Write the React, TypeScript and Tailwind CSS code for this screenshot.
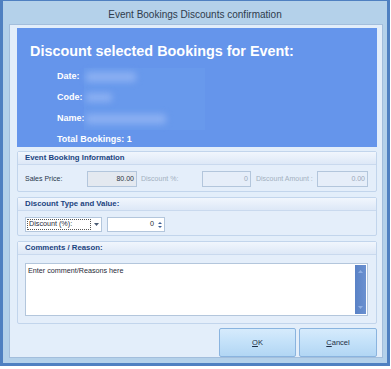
import type { ReactNode } from "react";

function Group({ title, className, children }: { title: string; className: string; children: ReactNode }) {
  return (
    <div className={`flex w-[360px] flex-col rounded-[2px] border border-[#c2d5ec] bg-[#e4eefa] ${className}`}>
      <div className="flex h-[13px] shrink-0 items-center border-b border-[#c9d9ee] bg-linear-to-b from-[#f1f6fd] to-[#dde8f7] pl-[7px] text-[7.8px] font-bold text-[#1b4480]">
        {title}
      </div>
      {children}
    </div>
  );
}

function ReadBox({ value, width, dark }: { value: string; width: string; dark?: boolean }) {
  return (
    <div
      className={`flex h-[16px] items-center justify-end border border-[#b3c6dc] pr-[2px] text-[7px] ${width} ${
        dark ? "bg-[#e4e9f0] text-[#2a3544]" : "bg-[#e6eef9] text-[#9aa8ba]"
      }`}
    >
      {value}
    </div>
  );
}

export default function App() {
  return (
    <div className="h-[369px] w-[391px] bg-white font-['Liberation_Sans',Arial,sans-serif]">
      <div className="flex h-[366px] w-[390px] flex-col border-x-[3px] border-t border-b-[3px] border-[#4f80c1] bg-[#b4d1ea]">
        {/* title bar */}
        <div className="flex h-[23px] items-center justify-center pt-[3px] text-[10px] text-[#2e3b4c]">
          Event Bookings Discounts confirmation
        </div>

        {/* client area */}
        <div className="ml-[6px] mr-[4px] flex h-[334px] flex-col border border-[#a3bedc] bg-[#e3eefa] pl-[7px] pt-[3px]">
          {/* banner */}
          <div className="relative h-[119px] w-[360px] shrink-0 bg-[#6595eb] pl-[13px] pt-[14px] text-white">
            <div className="text-[14.4px] font-bold leading-[18px]">Discount selected Bookings for Event:</div>
            <div className="mt-[6px] flex flex-col pl-[27px] text-[9px] font-bold">
              <div className="h-[21px] leading-[21px]">Date:</div>
              <div className="h-[21px] leading-[21px]">Code:</div>
              <div className="h-[21px] leading-[21px]">Name:</div>
              <div className="h-[21px] leading-[21px]">Total Bookings: 1</div>
            </div>
            {/* redacted values */}
            <div className="absolute left-[67px] top-[40px] h-[62px] w-[121px] bg-[#6899ec]">
              <div className="absolute left-[2px] top-[4px] h-[10px] w-[50px] rounded-[3px] bg-[#8aaff2] blur-[3px]" />
              <div className="absolute left-[2px] top-[25px] h-[9px] w-[26px] rounded-[3px] bg-[#8aaff2] blur-[3px]" />
              <div className="absolute left-[2px] top-[46px] h-[10px] w-[80px] rounded-[3px] bg-[#8aaff2] blur-[3px]" />
            </div>
          </div>

          {/* Event Booking Information */}
          <Group title="Event Booking Information" className="mt-[4px] h-[41px]">
            <div className="flex items-center pl-[7px] pt-[6px] text-[7px]">
              <span className="w-[62px] text-[#26364a]">Sales Price:</span>
              <ReadBox value="80.00" width="w-[50px]" dark />
              <span className="ml-[4px] w-[61px] text-[#a3b0c0]">Discount %:</span>
              <ReadBox value="0" width="w-[49px]" />
              <span className="ml-[5px] w-[61px] text-[#a3b0c0]">Discount Amount :</span>
              <ReadBox value="0.00" width="w-[51px]" />
            </div>
          </Group>

          {/* Discount Type and Value */}
          <Group title="Discount Type and Value:" className="mt-[5px] h-[39px]">
            <div className="flex items-center pl-[7px] pt-[6px] text-[7.2px] text-[#1f2a38]">
              <div className="flex h-[15px] w-[77px] items-stretch border border-[#b3c6dc] bg-white">
                <div className="m-[1px] flex flex-1 items-center border border-dotted border-[#555] pl-[1px]">
                  Discount (%):
                </div>
                <div className="flex w-[9px] items-center justify-center">
                  <svg width="5" height="3" viewBox="0 0 5 3">
                    <path d="M0 0h5L2.5 3z" fill="#4a5b73" />
                  </svg>
                </div>
              </div>
              <div className="ml-[5px] flex h-[15px] w-[58px] items-center justify-end border border-[#b3c6dc] bg-white pr-[2px]">
                <span className="mr-[4px]">0</span>
                <div className="flex flex-col gap-[2px]">
                  <svg width="4" height="2" viewBox="0 0 4 2">
                    <path d="M0 2h4L2 0z" fill="#3d5f96" />
                  </svg>
                  <svg width="4" height="2" viewBox="0 0 4 2">
                    <path d="M0 0h4L2 2z" fill="#3d5f96" />
                  </svg>
                </div>
              </div>
            </div>
          </Group>

          {/* Comments / Reason */}
          <Group title="Comments / Reason:" className="mt-[5px] h-[83px]">
            <div className="pl-[7px] pt-[8px]">
              <div className="flex h-[53px] w-[343px] border border-[#b3c6dc] bg-white">
                <div className="flex-1 pl-[2px] pt-[2px] text-[7.2px] text-[#1f2a38]">Enter comment/Reasons here</div>
                <div className="m-[1px] flex w-[11px] flex-col items-center justify-between bg-linear-to-r from-[#5a82c6] to-[#6a90d0] py-[5px]">
                  <svg width="5" height="3" viewBox="0 0 5 3">
                    <path d="M0 3h5L2.5 0z" fill="#8eaee2" />
                  </svg>
                  <svg width="5" height="3" viewBox="0 0 5 3">
                    <path d="M0 0h5L2.5 3z" fill="#8eaee2" />
                  </svg>
                </div>
              </div>
            </div>
          </Group>

          {/* buttons */}
          <div className="mt-[4px] flex w-[360px] justify-end gap-[3px]">
            <button className="flex h-[29px] w-[77px] items-center justify-center rounded-[2px] border border-[#8ab4df] bg-linear-to-b from-[#d6ebfc] via-[#c3e1f9] to-[#b2d6f4] text-[7.5px] text-[#1e2e45]">
              <span>
                <span className="underline">O</span>K
              </span>
            </button>
            <button className="flex h-[29px] w-[78px] items-center justify-center rounded-[2px] border border-[#8ab4df] bg-linear-to-b from-[#d6ebfc] via-[#c3e1f9] to-[#b2d6f4] text-[7.5px] text-[#1e2e45]">
              <span>
                <span className="underline">C</span>ancel
              </span>
            </button>
          </div>
        </div>
      </div>
    </div>
  );
}
